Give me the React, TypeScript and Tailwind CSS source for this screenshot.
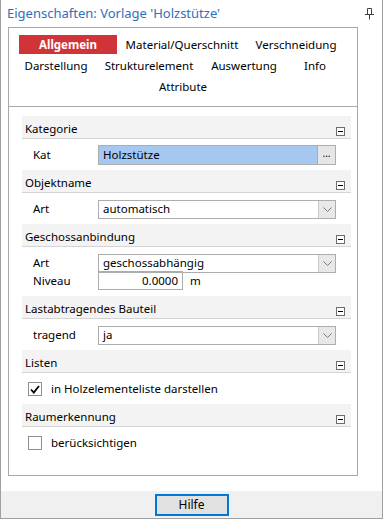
const FONT = "font-['Noto_Sans',_'Open_Sans',_sans-serif]";

function MinusBox() {
  return (
    <span className="flex h-[9px] w-[9px] items-center justify-center border border-[#6d6d6d] bg-white">
      <span className="h-px w-[5px] bg-black" />
    </span>
  );
}

function Section({ title, children }: { title: string; children: React.ReactNode }) {
  return (
    <div>
      <div className="flex h-[23px] items-end justify-between border-b border-[#d4d4d4] bg-[#f3f3f3] pl-[3px] pr-[6px]">
        <span className="self-center pt-[3px] leading-none">{title}</span>
        <span className="mb-[2px]">
          <MinusBox />
        </span>
      </div>
      <div className="pt-[7px] pb-[6px]">{children}</div>
    </div>
  );
}

function Row({ label, children }: { label: string; children: React.ReactNode }) {
  return (
    <div className="flex h-[18px] items-center">
      <span className="w-[76px] pl-[11px]">{label}</span>
      {children}
    </div>
  );
}

function Chevron() {
  return (
    <svg width="9" height="5" viewBox="0 0 9 5" fill="none" stroke="#7a7a7a" strokeWidth="1">
      <path d="M0.5 0.5L4.5 4.5L8.5 0.5" />
    </svg>
  );
}

function Combo({ value }: { value: string }) {
  return (
    <div className="flex h-[19px] w-[238px] items-stretch border border-[#adadad] bg-white">
      <span className="flex flex-1 items-center pl-[4px]">{value}</span>
      <span className="flex w-[17px] items-center justify-center border-l border-[#c8c8c8] bg-[#e8e8e8]">
        <Chevron />
      </span>
    </div>
  );
}

function Check({ checked }: { checked?: boolean }) {
  return (
    <span className="flex h-[14px] w-[14px] items-center justify-center border border-[#8f8f8f] bg-white">
      {checked && (
        <svg width="10" height="9" viewBox="0 0 10 9" fill="none" stroke="#000" strokeWidth="1.8">
          <path d="M1 4.5L3.8 7.5L9 1" />
        </svg>
      )}
    </span>
  );
}

export default function App() {
  return (
    <div className={`${FONT} relative flex h-[519px] w-[383px] flex-col border-x border-b border-[#a0a0a0] bg-white text-[11.5px] text-black`}>
      {/* title */}
      <div className="flex h-[27px] items-center justify-between pl-[6px] pr-[8px]">
        <span className="text-[13px] text-[#2f6fbd]">Eigenschaften: Vorlage 'Holzstütze'</span>
        <svg width="9" height="12" viewBox="0 0 9 12" fill="none" stroke="#404040" strokeWidth="1">
          <path d="M2.5 0.5V6.5M6.5 0.5V6.5M2.5 0.5H6.5M0 6.5H9M4.5 6.5V11.5" />
        </svg>
      </div>

      {/* panel */}
      <div className="ml-[7px] mr-[24px] flex h-[449px] flex-col border border-[#a8a8a8]">
        <div className="flex h-[79px] flex-col border-b border-[#a8a8a8] pt-[7px]">
          <div className="flex h-[19px] justify-center pr-[2px]">
            <span className="flex w-[98px] items-center justify-center bg-[#d13438] font-bold text-white">Allgemein</span>
            <span className="flex w-[130px] items-center justify-center">Material/Querschnitt</span>
            <span className="flex w-[98px] items-center justify-center">Verschneidung</span>
          </div>
          <div className="mt-[2px] flex h-[20px] justify-center pr-[2px]">
            <span className="flex w-[76px] items-center justify-center">Darstellung</span>
            <span className="flex w-[110px] items-center justify-center">Strukturelement</span>
            <span className="flex w-[80px] items-center justify-center">Auswertung</span>
            <span className="flex w-[62px] items-center justify-center">Info</span>
          </div>
          <div className="mt-[1px] flex h-[20px] justify-center">
            <span className="flex items-center">Attribute</span>
          </div>
        </div>

        <div className="flex flex-col pl-[13px] pr-[6px] pt-[9px]">
          <Section title="Kategorie">
            <Row label="Kat">
              <div className="flex h-[20px] w-[238px] items-stretch border border-[#adadad]">
                <span className="flex flex-1 items-center bg-[#a6c8f0] pl-[4px]">Holzstütze</span>
                <span className="flex w-[18px] items-center justify-center border-l border-[#adadad] bg-[#e6e6e6] pb-[3px] text-[10px]">...</span>
              </div>
            </Row>
          </Section>
          <Section title="Objektname">
            <Row label="Art">
              <Combo value="automatisch" />
            </Row>
          </Section>
          <Section title="Geschossanbindung">
            <Row label="Art">
              <Combo value="geschossabhängig" />
            </Row>
            <Row label="Niveau">
              <div className="-mt-px flex h-[19px] w-[85px] items-center justify-end border border-[#adadad] pr-[4px]">0.0000</div>
              <span className="ml-[7px]">m</span>
            </Row>
          </Section>
          <Section title="Lastabtragendes Bauteil">
            <Row label="tragend">
              <Combo value="ja" />
            </Row>
          </Section>
          <Section title="Listen">
            <div className="flex h-[18px] items-center pl-[6px]">
              <Check checked />
              <span className="ml-[9px]">in Holzelementeliste darstellen</span>
            </div>
          </Section>
          <Section title="Raumerkennung">
            <div className="flex h-[18px] items-center pl-[6px]">
              <Check />
              <span className="ml-[9px]">berücksichtigen</span>
            </div>
          </Section>
        </div>
      </div>

      {/* footer */}
      <div className="mt-[15px] flex flex-1 items-start justify-center bg-[#f0f0f0] pt-[3px]">
        <button className="flex h-[22px] w-[74px] items-center justify-center border-2 border-[#0078d7] bg-[#e1e1e1] text-[12px]">
          Hilfe
        </button>
      </div>
    </div>
  );
}
